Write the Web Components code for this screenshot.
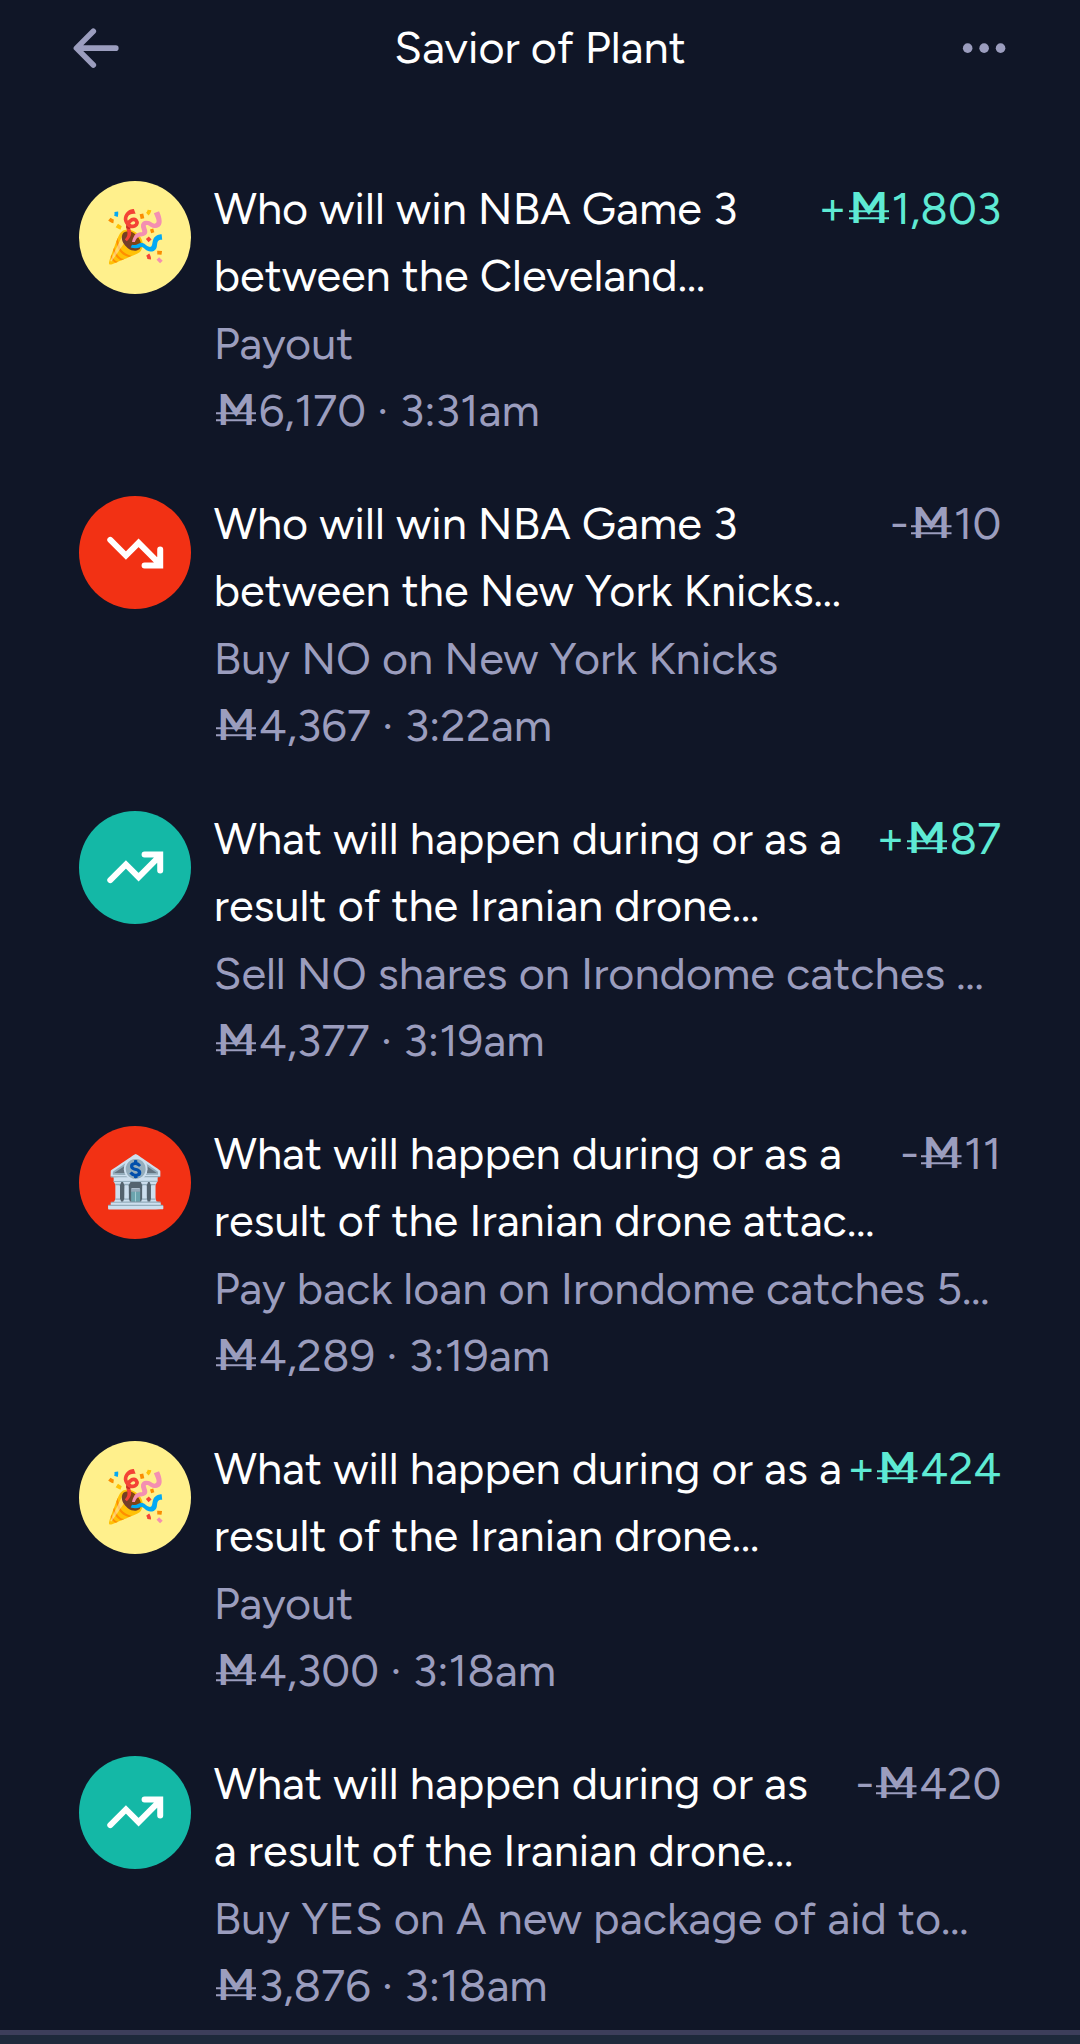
<!DOCTYPE html>
<html lang="en">
<head>
<meta charset="utf-8">
<title>Savior of Plant</title>
<style>
    :root { --canvas: #101627; --muted: #9b9dbe; --gain: #5eead4; --red: #f23114; --teal: #14b8a6; --yellow: #fff08c; }
    body { margin: 0; height: 2044px; overflow: hidden; background: var(--canvas); color: #fff; font: 400 45px/67.5px Figtree, Lato, "Noto Sans", sans-serif; }
</style>
</head>
<body>
<balance-page>
    <page-header slot="header">Savior of Plant</page-header>

    <balance-change icon="party" change="+1,803" balance="6,170" time="3:31am">
        Who will win NBA Game 3<br>between the Cleveland…
        <span slot="action">Payout</span>
    </balance-change>
    <balance-change icon="down" change="-10" balance="4,367" time="3:22am">
        Who will win NBA Game 3<br>between the New York Knicks…
        <span slot="action">Buy NO on New York Knicks</span>
    </balance-change>
    <balance-change icon="up" change="+87" balance="4,377" time="3:19am">
        What will happen during or as a<br>result of the Iranian drone…
        <span slot="action">Sell NO shares on Irondome catches …</span>
    </balance-change>
    <balance-change icon="bank" change="-11" balance="4,289" time="3:19am">
        What will happen during or as a<br>result of the Iranian drone attac…
        <span slot="action">Pay back loan on Irondome catches 5…</span>
    </balance-change>
    <balance-change icon="party" change="+424" balance="4,300" time="3:18am">
        What will happen during or as a<br>result of the Iranian drone…
        <span slot="action">Payout</span>
    </balance-change>
    <balance-change icon="up" change="-420" balance="3,876" time="3:18am">
        What will happen during or as<br>a result of the Iranian drone…
        <span slot="action">Buy YES on A new package of aid to…</span>
    </balance-change>
</balance-page>

<script>
class BalancePage extends HTMLElement {
    constructor() {
        super();
        this.attachShadow({ mode: 'open' });
        this.shadowRoot.innerHTML = `
            <style>
                :host { display: flex; flex-direction: column; height: 2044px; }
                main { flex: 1; display: flex; flex-direction: column; gap: 45px; padding: 78.8px 78.75px 0; }
                footer { height: 9px; border-top: 5.5px solid #3d3e5b; background: #1e293b; }
            </style>
            <slot name="header"></slot>
            <main><slot></slot></main>
            <footer></footer>
        `;
    }
}

class PageHeader extends HTMLElement {
    constructor() {
        super();
        this.attachShadow({ mode: 'open' });
        this.shadowRoot.innerHTML = `
            <style>
                :host { display: flex; align-items: center; justify-content: space-between; height: 96px; padding: 0 67.5px; box-sizing: border-box; }
                svg { width: 56.25px; height: 56.25px; fill: var(--muted); }
            </style>
            <svg viewBox="0 0 20 20"><path fill-rule="evenodd" d="M9.707 16.707a1 1 0 01-1.414 0l-6-6a1 1 0 010-1.414l6-6a1 1 0 011.414 1.414L5.414 9H17a1 1 0 110 2H5.414l4.293 4.293a1 1 0 010 1.414z"/></svg>
            <slot></slot>
            <svg viewBox="0 0 20 20"><circle cx="4.15" cy="10" r="1.7"/><circle cx="10" cy="10" r="1.7"/><circle cx="15.85" cy="10" r="1.7"/></svg>
        `;
    }
}

// Mana currency mark: an M crossed by two thin bars
class ManaMark extends HTMLElement {
    constructor() {
        super();
        this.attachShadow({ mode: 'open' });
        this.shadowRoot.innerHTML = `
            <style>
                :host { display: inline-block; position: relative; width: 45px; height: 67.5px; line-height: 65.2px; vertical-align: top; text-align: center; font-weight: 600; }
                svg { position: absolute; left: 2.2px; top: 35px; width: 40.5px; height: 10px; stroke: currentColor; stroke-width: 2; }
            </style>M<svg viewBox="0 0 40.5 10"><path d="M0 1.2h40.5M0 8.3h40.5"/></svg>
        `;
    }
}

class ChangeIcon extends HTMLElement {
    constructor() {
        super();
        this.attachShadow({ mode: 'open' });
    }

    connectedCallback() {
        const type = this.getAttribute('type');
        const trend = `<svg viewBox="0 0 338 338"><path d="M94 207L141 160L179 198L239 138M197 130H244V178"/></svg>`;
        const glyphs = { party: '🎉', bank: '🏦', up: trend, down: trend };
        const colors = { party: 'var(--yellow)', bank: 'var(--red)', up: 'var(--teal)', down: 'var(--red)' };
        this.shadowRoot.innerHTML = `
            <style>
                :host { display: flex; align-items: center; justify-content: center; flex: none; width: 112.5px; height: 113px; border-radius: 50%; background: ${colors[type]}; font-size: 50.5px; line-height: 65px; }
                span { padding-bottom: 2px; }
                svg { width: 100%; height: 100%; fill: none; stroke: #fff; stroke-width: 18; stroke-linecap: round; ${type === 'down' ? 'transform: scaleY(-1);' : ''} }
            </style>
            ${glyphs[type] === trend ? trend : `<span>${glyphs[type]}</span>`}
        `;
    }
}

class BalanceChange extends HTMLElement {
    constructor() {
        super();
        this.attachShadow({ mode: 'open' });
    }

    connectedCallback() {
        const change = this.getAttribute('change');
        const gain = change[0] === '+';
        this.shadowRoot.innerHTML = `
            <style>
                :host { display: flex; gap: 22.5px; height: 270px; white-space: nowrap; }
                change-icon { margin-top: 6.1px; }
                .body { flex: 1; min-width: 0; }
                .top { display: flex; justify-content: space-between; height: 135px; }
                .title { min-width: 0; }
                .amount { color: ${gain ? 'var(--gain)' : 'var(--muted)'}; }
                .muted { color: var(--muted); height: 67.5px; }
            </style>
            <change-icon type="${this.getAttribute('icon')}"></change-icon>
            <div class="body">
                <div class="top">
                    <div class="title"><slot></slot></div>
                    <div class="amount">${change[0]}<mana-mark></mana-mark>${change.slice(1)}</div>
                </div>
                <div class="muted"><slot name="action"></slot></div>
                <div class="muted"><mana-mark></mana-mark>${this.getAttribute('balance')} · ${this.getAttribute('time')}</div>
            </div>
        `;
    }
}

customElements.define('mana-mark', ManaMark);
customElements.define('change-icon', ChangeIcon);
customElements.define('page-header', PageHeader);
customElements.define('balance-change', BalanceChange);
customElements.define('balance-page', BalancePage);
</script>
</body>
</html>
